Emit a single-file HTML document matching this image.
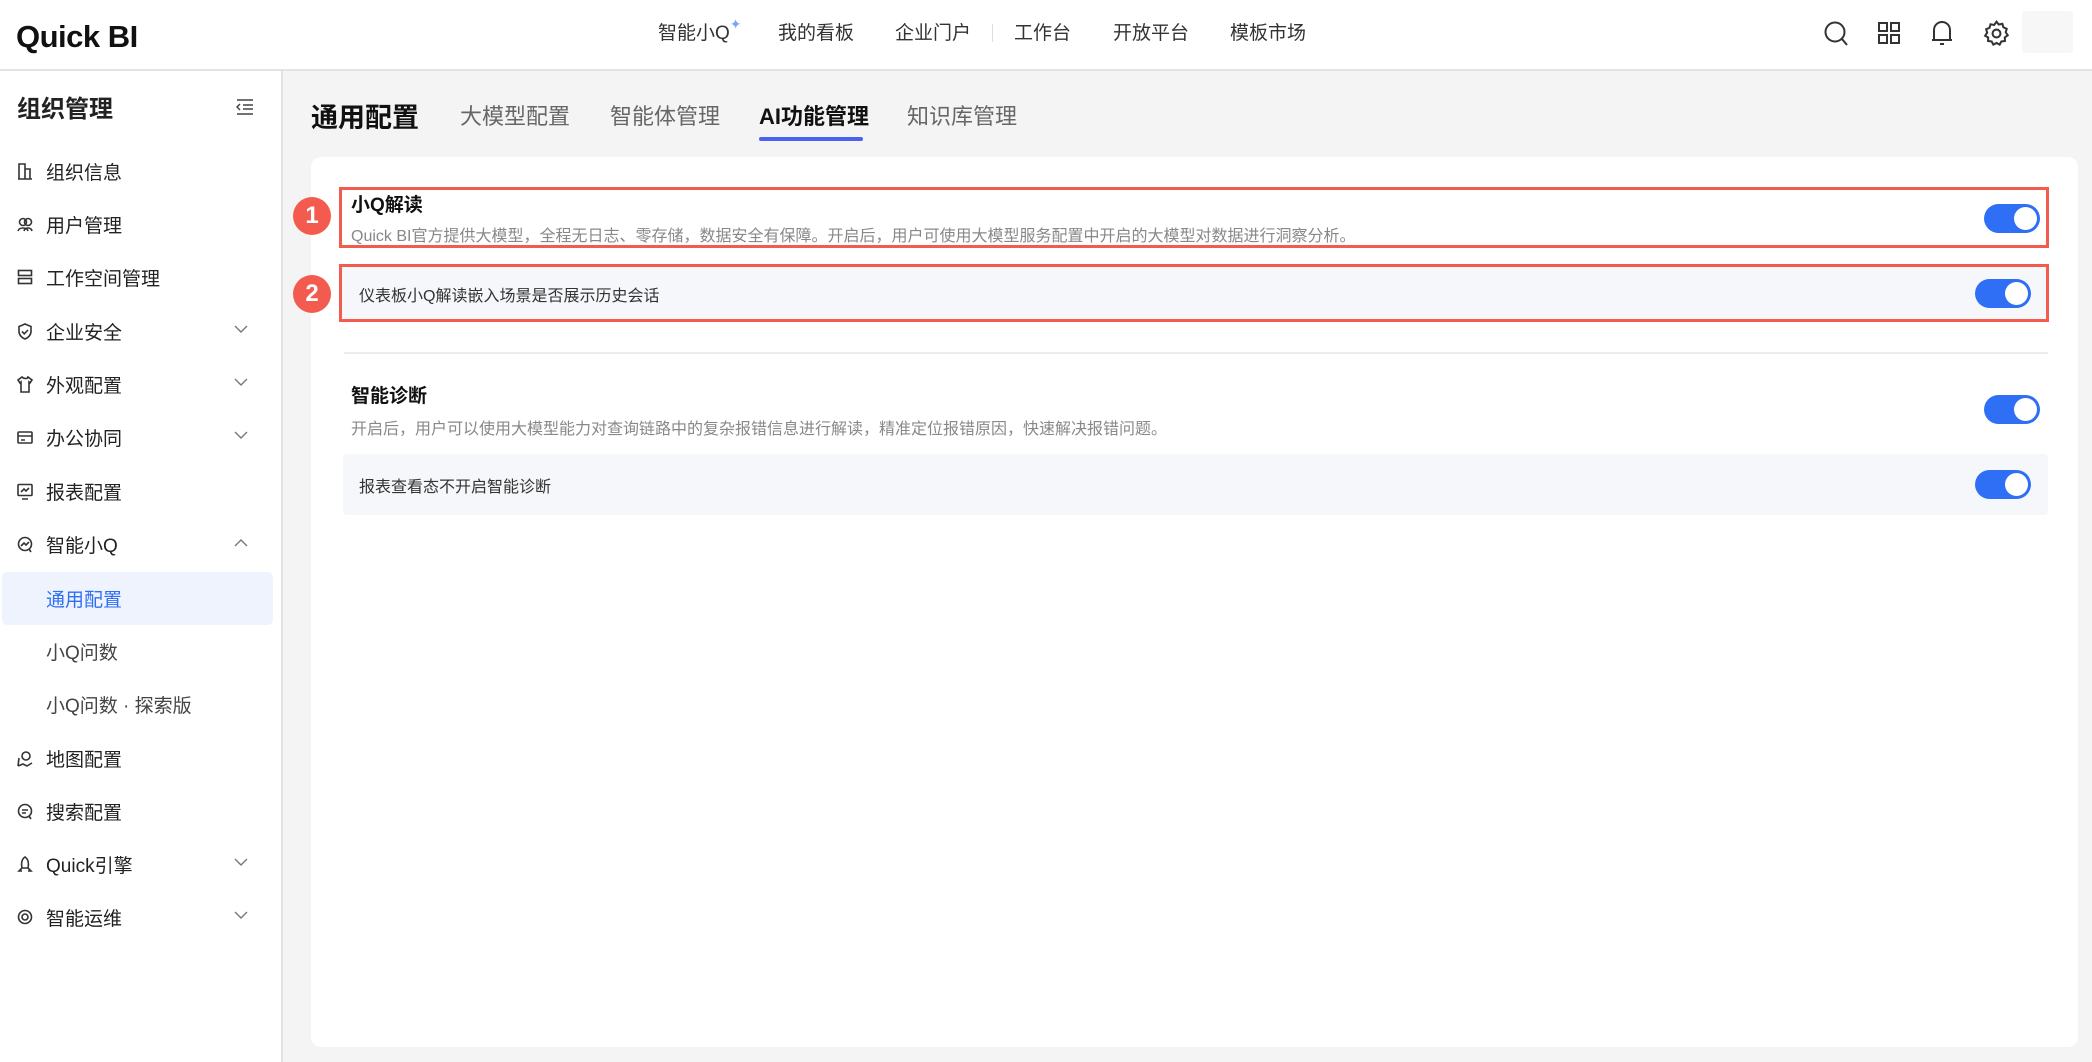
<!DOCTYPE html>
<html><head><meta charset="utf-8"><style>
*{margin:0;padding:0;box-sizing:border-box}
body{width:2092px;height:1062px;overflow:hidden;background:#f4f4f5;font-family:"Liberation Sans","Noto Sans CJK SC",sans-serif;color:#222;position:relative}
.abs{position:absolute;white-space:nowrap}
.top{position:absolute;left:0;top:0;width:2092px;height:71px;background:#fff;border-bottom:2px solid #e3e3e3}
.nav{font-size:19px;color:#333;top:18px}
.side{position:absolute;left:0;top:71px;width:283px;height:991px;background:#fff;border-right:2px solid #e2e2e2}
.mi{position:absolute;left:0;width:283px;height:53px;font-size:19px;color:#222}
.mi .t{position:absolute;left:46px;top:13px}
.mi svg.ic{position:absolute;left:17px;top:18px}
.mi svg.ch{position:absolute;left:234px;top:20px}
.tab{font-size:22px;color:#666;top:99px}
.card{position:absolute;left:311px;top:157px;width:1767px;height:890px;background:#fff;border-radius:10px}
.tg{position:absolute;width:56px;height:29px;border-radius:15px;background:#2f6ff5}
.tg:after{content:"";position:absolute;right:3px;top:3px;width:23px;height:23px;border-radius:50%;background:#fff}
.badge{position:absolute;width:38px;height:38px;border-radius:50%;background:#f45b4f;color:#fff;font-size:24px;font-weight:bold;text-align:center;line-height:38px}
.rb{position:absolute;border:3px solid #f45b4f}
</style></head><body>
<div class="top">
<div class="abs" style="left:16px;top:19px;font-size:31px;font-weight:bold;color:#111;letter-spacing:-0.5px">Quick BI</div>
<div class="abs nav" style="left:658px">智能小Q<span style="color:#7aa5f5;font-size:14px;position:relative;top:-10px">✦</span></div>
<div class="abs nav" style="left:778px">我的看板</div>
<div class="abs nav" style="left:895px">企业门户</div>
<div class="abs" style="left:992px;top:24px;width:1px;height:18px;background:#ddd"></div>
<div class="abs nav" style="left:1014px">工作台</div>
<div class="abs nav" style="left:1113px">开放平台</div>
<div class="abs nav" style="left:1230px">模板市场</div>
<svg class="abs" style="left:1823px;top:20px" width="26" height="28" viewBox="0 0 26 28" fill="none" stroke="#333" stroke-width="2"><circle cx="12" cy="12" r="9.5"/><path d="M19 19l5 6"/></svg>
<svg class="abs" style="left:1877px;top:21px" width="24" height="24" viewBox="0 0 24 24" fill="none" stroke="#333" stroke-width="2"><rect x="2" y="2" width="8" height="8"/><rect x="14" y="2" width="8" height="8"/><rect x="2" y="14" width="8" height="8"/><rect x="14" y="14" width="8" height="8"/></svg>
<svg class="abs" style="left:1930px;top:19px" width="24" height="28" viewBox="0 0 24 28" fill="none" stroke="#333" stroke-width="2"><path d="M4 21V11a8 8 0 0116 0v10zM2 21h20M10 25h4M12 2v1"/></svg>
<svg class="abs" style="left:1983px;top:20px" width="27" height="27" viewBox="0 0 24 24" fill="none" stroke="#333" stroke-width="1.8"><circle cx="12" cy="12" r="3.5"/><path d="M12 1.5l2 2.5 3.2-.6.9 3.1 3 1.3-.9 3.1 1.8 2.7-2.6 1.9.1 3.2-3.2.4-1.5 2.8-2.8-1.5-2.8 1.5-1.5-2.8-3.2-.4.1-3.2L1.9 14l1.8-2.7-.9-3.1 3-1.3.9-3.1 3.2.6z"/></svg>
<div class="abs" style="left:2022px;top:11px;width:51px;height:42px;background:#f7f7f7;border-radius:3px"></div>
</div>

<div class="side">
<div class="abs" style="left:17px;top:18px;font-size:24px;font-weight:bold">组织管理</div>
<svg class="abs" style="left:236px;top:27px" width="18" height="18" viewBox="0 0 18 18" fill="none" stroke="#444" stroke-width="1.5"><path d="M1 2h16M7 7h10M7 11h10M1 16h16M4 6l-3 3 3 3"/></svg>
</div>
<div class="mi" style="top:145px"><svg class="ic" width="16" height="17" fill="none" stroke="#333" stroke-width="1.6"><path d="M2 16V1h6v15M8 6h5v10M1 16h14"/></svg><span class="t">组织信息</span></div>
<div class="mi" style="top:198px"><svg class="ic" width="16" height="17" fill="none" stroke="#333" stroke-width="1.6"><circle cx="6" cy="6" r="3.5"/><circle cx="11" cy="6" r="3.5"/><path d="M1 15c1-4 9-4 10 0M7 15c1-4 7-4 8 0"/></svg><span class="t">用户管理</span></div>
<div class="mi" style="top:251px"><svg class="ic" width="16" height="17" fill="none" stroke="#333" stroke-width="1.6"><rect x="1.5" y="1.5" width="13" height="5"/><rect x="1.5" y="9.5" width="13" height="5"/></svg><span class="t">工作空间管理</span></div>
<div class="mi" style="top:305px"><svg class="ic" width="16" height="17" fill="none" stroke="#333" stroke-width="1.6"><path d="M8 1l6 2.5v5C14 12 11 15 8 16 5 15 2 12 2 8.5v-5zM5 8.5l2.3 2.3L11 7"/></svg><span class="t">企业安全</span><svg class="ch" width="14" height="9" fill="none" stroke="#777" stroke-width="1.4"><path d="M1 1l6 6 6-6"/></svg></div>
<div class="mi" style="top:358px"><svg class="ic" width="16" height="17" fill="none" stroke="#333" stroke-width="1.6"><path d="M5 1L1 4l2 3 1-1v10h8V6l1 1 2-3-4-3c0 2-4 2-6 0z"/></svg><span class="t">外观配置</span><svg class="ch" width="14" height="9" fill="none" stroke="#777" stroke-width="1.4"><path d="M1 1l6 6 6-6"/></svg></div>
<div class="mi" style="top:411px"><svg class="ic" width="16" height="17" fill="none" stroke="#333" stroke-width="1.6"><rect x="1" y="3" width="14" height="11" rx="1"/><path d="M1 7h14M4 11h4"/></svg><span class="t">办公协同</span><svg class="ch" width="14" height="9" fill="none" stroke="#777" stroke-width="1.4"><path d="M1 1l6 6 6-6"/></svg></div>
<div class="mi" style="top:465px"><svg class="ic" width="16" height="17" fill="none" stroke="#333" stroke-width="1.6"><rect x="1" y="1.5" width="14" height="11" rx="1"/><path d="M4 9l3-3 2 2 3-3M5 16h6"/></svg><span class="t">报表配置</span></div>
<div class="mi" style="top:518px"><svg class="ic" width="16" height="17" fill="none" stroke="#333" stroke-width="1.6"><circle cx="8" cy="8" r="6.5"/><path d="M4 10l3-3 2 2 3-3M12 13l2 3"/></svg><span class="t">智能小Q</span><svg class="ch" width="14" height="9" fill="none" stroke="#777" stroke-width="1.4"><path d="M1 8l6-6 6 6"/></svg></div>
<div class="abs" style="left:2px;top:572px;width:271px;height:53px;background:#eef3fe;border-radius:5px"></div>
<div class="mi" style="top:572px"><span class="t" style="color:#2f6ff5">通用配置</span></div>
<div class="mi" style="top:625px"><span class="t" style="color:#444">小Q问数</span></div>
<div class="mi" style="top:678px"><span class="t" style="color:#444">小Q问数 · 探索版</span></div>
<div class="mi" style="top:732px"><svg class="ic" width="16" height="17" fill="none" stroke="#333" stroke-width="1.6"><circle cx="9" cy="6" r="4"/><path d="M1 16l1-8M1 16l5-2 4 2 5-3"/></svg><span class="t">地图配置</span></div>
<div class="mi" style="top:785px"><svg class="ic" width="16" height="17" fill="none" stroke="#333" stroke-width="1.6"><circle cx="8" cy="8" r="6.5"/><path d="M5 7h6M5 10h4M12 13l2 3"/></svg><span class="t">搜索配置</span></div>
<div class="mi" style="top:838px"><svg class="ic" width="16" height="17" fill="none" stroke="#333" stroke-width="1.6"><path d="M8 1c3 2 4 6 3 11H5C4 7 5 3 8 1zM5 12l-3 3h3M11 12l3 3h-3"/></svg><span class="t">Quick引擎</span><svg class="ch" width="14" height="9" fill="none" stroke="#777" stroke-width="1.4"><path d="M1 1l6 6 6-6"/></svg></div>
<div class="mi" style="top:891px"><svg class="ic" width="16" height="17" fill="none" stroke="#333" stroke-width="1.6"><circle cx="8" cy="8" r="6.5"/><circle cx="8" cy="8" r="3"/></svg><span class="t">智能运维</span><svg class="ch" width="14" height="9" fill="none" stroke="#777" stroke-width="1.4"><path d="M1 1l6 6 6-6"/></svg></div>

<div class="abs" style="left:311px;top:96px;font-size:27px;font-weight:bold;color:#111">通用配置</div>
<div class="abs tab" style="left:460px">大模型配置</div>
<div class="abs tab" style="left:610px">智能体管理</div>
<div class="abs tab" style="left:759px;color:#111;font-weight:bold">AI功能管理</div>
<div class="abs" style="left:759px;top:137px;width:104px;height:4px;background:#4c62ee;border-radius:2px"></div>
<div class="abs tab" style="left:907px">知识库管理</div>

<div class="card"></div>
<div class="rb" style="left:339px;top:187px;width:1710px;height:61px"></div>
<div class="abs" style="left:351px;top:190px;font-size:19px;font-weight:bold;color:#111">小Q解读</div>
<div class="abs" style="left:351px;top:222px;font-size:16px;color:#888">Quick BI官方提供大模型，全程无日志、零存储，数据安全有保障。开启后，用户可使用大模型服务配置中开启的大模型对数据进行洞察分析。</div>
<div class="tg" style="left:1984px;top:204px"></div>
<div class="badge" style="left:293px;top:197px">1</div>

<div class="rb" style="left:339px;top:264px;width:1710px;height:58px;background:#f6f7fb"></div>
<div class="abs" style="left:359px;top:282px;font-size:16px;color:#333">仪表板小Q解读嵌入场景是否展示历史会话</div>
<div class="tg" style="left:1975px;top:279px"></div>
<div class="badge" style="left:293px;top:275px">2</div>

<div class="abs" style="left:344px;top:352px;width:1704px;height:2px;background:#ececec"></div>
<div class="abs" style="left:351px;top:381px;font-size:19px;font-weight:bold;color:#111">智能诊断</div>
<div class="abs" style="left:351px;top:415px;font-size:16px;color:#888">开启后，用户可以使用大模型能力对查询链路中的复杂报错信息进行解读，精准定位报错原因，快速解决报错问题。</div>
<div class="tg" style="left:1984px;top:395px"></div>
<div class="abs" style="left:343px;top:454px;width:1705px;height:61px;background:#f6f7fb;border-radius:4px"></div>
<div class="abs" style="left:359px;top:473px;font-size:16px;color:#333">报表查看态不开启智能诊断</div>
<div class="tg" style="left:1975px;top:470px"></div>
</body></html>
